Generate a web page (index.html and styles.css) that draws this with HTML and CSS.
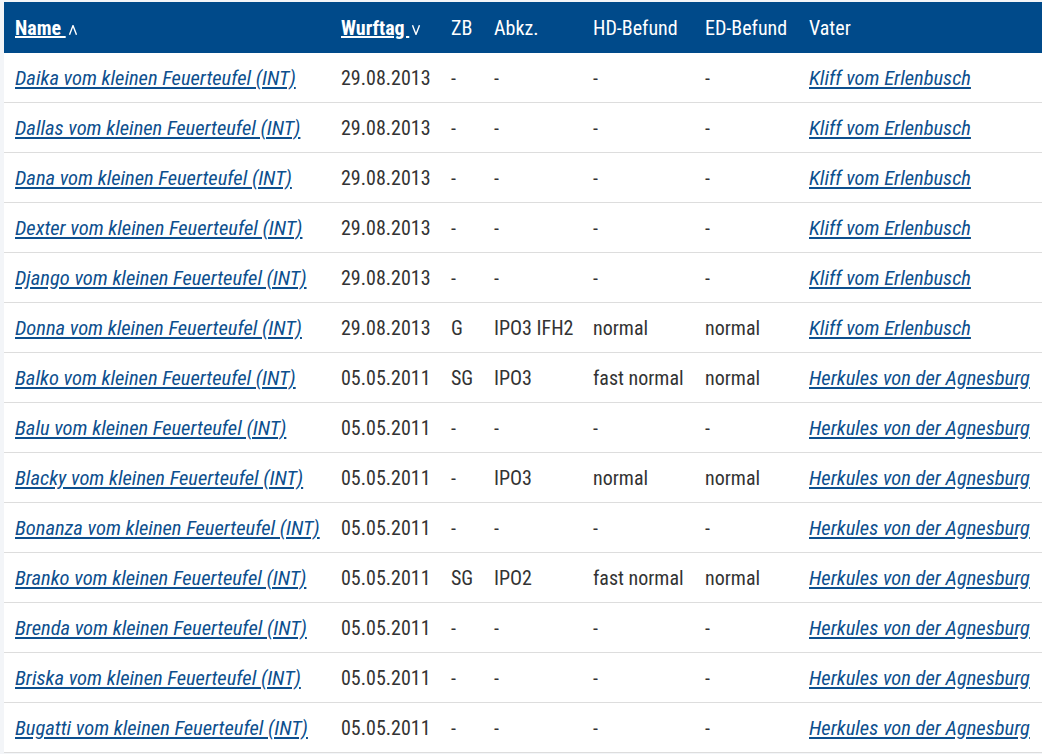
FILE: index.html
```html
<!DOCTYPE html>
<html lang="de">
<head>
<meta charset="utf-8">
<link rel="stylesheet" href="styles.css">
</head>
<body>
<div class="wrap">
<table class="litter">
<colgroup>
<col class="w-name"><col class="w-date"><col class="w-zb"><col class="w-abk"><col class="w-hd"><col class="w-ed"><col class="w-vater">
</colgroup>
<thead>
<tr>
<th><a href="#">Name </a><svg class="arrow" width="10" height="10" viewBox="0 0 10 10"><polyline points="1.5,9.8 5,0.6 8.5,9.8" fill="none" stroke="#fff" stroke-width="1.4"/></svg></th>
<th><a href="#">Wurftag </a><svg class="arrow" width="10" height="10" viewBox="0 0 10 10"><polyline points="1.5,0.2 5,9.4 8.5,0.2" fill="none" stroke="#fff" stroke-width="1.4"/></svg></th>
<th>ZB</th>
<th>Abkz.</th>
<th>HD-Befund</th>
<th>ED-Befund</th>
<th>Vater</th>
</tr>
</thead>
<tbody>
<tr><td><a href="#">Daika vom kleinen Feuerteufel (INT)</a></td><td>29.08.2013</td><td>-</td><td>-</td><td>-</td><td>-</td><td><a href="#">Kliff vom Erlenbusch</a></td></tr>
<tr><td><a href="#">Dallas vom kleinen Feuerteufel (INT)</a></td><td>29.08.2013</td><td>-</td><td>-</td><td>-</td><td>-</td><td><a href="#">Kliff vom Erlenbusch</a></td></tr>
<tr><td><a href="#">Dana vom kleinen Feuerteufel (INT)</a></td><td>29.08.2013</td><td>-</td><td>-</td><td>-</td><td>-</td><td><a href="#">Kliff vom Erlenbusch</a></td></tr>
<tr><td><a href="#">Dexter vom kleinen Feuerteufel (INT)</a></td><td>29.08.2013</td><td>-</td><td>-</td><td>-</td><td>-</td><td><a href="#">Kliff vom Erlenbusch</a></td></tr>
<tr><td><a href="#">Django vom kleinen Feuerteufel (INT)</a></td><td>29.08.2013</td><td>-</td><td>-</td><td>-</td><td>-</td><td><a href="#">Kliff vom Erlenbusch</a></td></tr>
<tr><td><a href="#">Donna vom kleinen Feuerteufel (INT)</a></td><td>29.08.2013</td><td>G</td><td>IPO3 IFH2</td><td>normal</td><td>normal</td><td><a href="#">Kliff vom Erlenbusch</a></td></tr>
<tr><td><a href="#">Balko vom kleinen Feuerteufel (INT)</a></td><td>05.05.2011</td><td>SG</td><td>IPO3</td><td>fast normal</td><td>normal</td><td><a href="#">Herkules von der Agnesburg</a></td></tr>
<tr><td><a href="#">Balu vom kleinen Feuerteufel (INT)</a></td><td>05.05.2011</td><td>-</td><td>-</td><td>-</td><td>-</td><td><a href="#">Herkules von der Agnesburg</a></td></tr>
<tr><td><a href="#">Blacky vom kleinen Feuerteufel (INT)</a></td><td>05.05.2011</td><td>-</td><td>IPO3</td><td>normal</td><td>normal</td><td><a href="#">Herkules von der Agnesburg</a></td></tr>
<tr><td><a href="#">Bonanza vom kleinen Feuerteufel (INT)</a></td><td>05.05.2011</td><td>-</td><td>-</td><td>-</td><td>-</td><td><a href="#">Herkules von der Agnesburg</a></td></tr>
<tr><td><a href="#">Branko vom kleinen Feuerteufel (INT)</a></td><td>05.05.2011</td><td>SG</td><td>IPO2</td><td>fast normal</td><td>normal</td><td><a href="#">Herkules von der Agnesburg</a></td></tr>
<tr><td><a href="#">Brenda vom kleinen Feuerteufel (INT)</a></td><td>05.05.2011</td><td>-</td><td>-</td><td>-</td><td>-</td><td><a href="#">Herkules von der Agnesburg</a></td></tr>
<tr><td><a href="#">Briska vom kleinen Feuerteufel (INT)</a></td><td>05.05.2011</td><td>-</td><td>-</td><td>-</td><td>-</td><td><a href="#">Herkules von der Agnesburg</a></td></tr>
<tr><td><a href="#">Bugatti vom kleinen Feuerteufel (INT)</a></td><td>05.05.2011</td><td>-</td><td>-</td><td>-</td><td>-</td><td><a href="#">Herkules von der Agnesburg</a></td></tr>
</tbody>
</table>
</div>
</body>
</html>
```

FILE: styles.css
```css
html, body {
  margin: 0;
  padding: 0;
  background: #f3f5f8;
}
body {
  font-family: "Roboto Condensed", "Liberation Sans Narrow", Roboto, sans-serif;
  font-size: 20px;
  color: #333;
}
.wrap {
  padding: 2px 0 0 4px;
}
.litter {
  border-collapse: collapse;
  background: #fff;
  width: 1038px;
  table-layout: fixed;
}
.w-name { width: 327px; }
.w-date { width: 110px; }
.w-zb { width: 43px; }
.w-abk { width: 99px; }
.w-hd { width: 112px; }
.w-ed { width: 104px; }
.w-vater { width: 243px; }
.litter th {
  background: #004a8a;
  color: #fff;
  font-weight: 400;
  text-align: left;
  height: 51px;
  padding: 0 0 0 10px;
  white-space: nowrap;
}
.litter th:first-child,
.litter td:first-child {
  padding-left: 11px;
}
.litter th a {
  color: #fff;
  font-weight: 700;
  text-decoration: underline;
}
.litter th .arrow {
  margin-left: 2px;
  vertical-align: 0;
}
.litter td {
  height: 49px;
  padding: 0 0 0 10px;
  border-bottom: 1px solid #ddd;
  white-space: nowrap;
}
.litter td a {
  color: #0d4f8e;
  font-style: italic;
  font-size: 20.5px;
  text-decoration: underline;
}
```
